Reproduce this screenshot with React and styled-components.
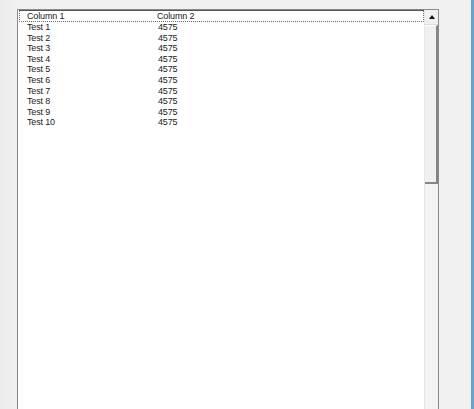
import React from "react";
import styled, { createGlobalStyle } from "styled-components";

const Global = createGlobalStyle`
  html, body { margin: 0; padding: 0; background: #f0f0f0; overflow: hidden; }
  #root { height: 409px; }
`;

const Page = styled.div`
  display: flex;
  height: 409px;
  width: 474px;
  background: linear-gradient(90deg, #ececec 0px, #f0f0f0 14px);
`;

const Main = styled.div`
  flex: 1;
  padding: 9px 0 0 17px;
  display: flex;
  flex-direction: column;
`;

const Edge = styled.div`
  width: 3px;
  background: #5ca6e0;
`;

const ListBox = styled.div`
  width: 420px;
  flex: 1;
  display: flex;
  border: 1px solid #8a8a8a;
  border-bottom: none;
  background: #fff;
`;

const Content = styled.div`
  flex: 1;
  display: flex;
  flex-direction: column;
  font-family: "Liberation Sans", Arial, sans-serif;
  font-size: 9px;
  letter-spacing: -0.15px;
  color: #1a1a1a;
`;

const Header = styled.div`
  display: flex;
  height: 10px;
  margin: 0 0 0 1px;
  border: 1px dotted #6b6b6b;
  border-top: 1px solid #555;
  align-items: center;
`;

const Row = styled.div`
  display: flex;
  height: 10.55px;
  align-items: center;
`;

const Cell = styled.div`
  width: ${(p) => p.$w}px;
  padding-left: ${(p) => p.$pad}px;
  white-space: nowrap;
  line-height: 10px;
`;

const Scrollbar = styled.div`
  width: 13px;
  display: flex;
  flex-direction: column;
  background: #f4f4f4;
  border-left: 1px solid #e6e6e6;
`;

const UpButton = styled.div`
  height: 14px;
  display: flex;
  align-items: center;
  justify-content: center;
  background: #f0f0f0;
  border-bottom: 1px solid #dcdcdc;
`;

const Arrow = styled.div`
  width: 0;
  height: 0;
  border-left: 3.5px solid transparent;
  border-right: 3.5px solid transparent;
  border-bottom: 4px solid #111;
`;

const Thumb = styled.div`
  height: 156px;
  background: #f0f0f0;
  border-right: 2px solid #858585;
  border-bottom: 2px solid #858585;
  border-top: 1px solid #fff;
`;

const Track = styled.div`
  flex: 1;
  background: #f3f3f3;
`;

const rows = Array.from({ length: 10 }, (_, i) => ({ name: `Test ${i + 1}`, value: "4575" }));

export default function App() {
  return (
    <>
      <Global />
      <Page>
        <Main>
          <ListBox>
            <Content>
              <Header>
                <Cell $w={130} $pad={7}>Column 1</Cell>
                <Cell $w={120} $pad={0}>Column 2</Cell>
              </Header>
              {rows.map((r) => (
                <Row key={r.name}>
                  <Cell $w={131} $pad={9}>{r.name}</Cell>
                  <Cell $w={120} $pad={0}>{r.value}</Cell>
                </Row>
              ))}
            </Content>
            <Scrollbar>
              <UpButton>
                <Arrow />
              </UpButton>
              <Thumb />
              <Track />
            </Scrollbar>
          </ListBox>
        </Main>
        <Edge />
      </Page>
    </>
  );
}
